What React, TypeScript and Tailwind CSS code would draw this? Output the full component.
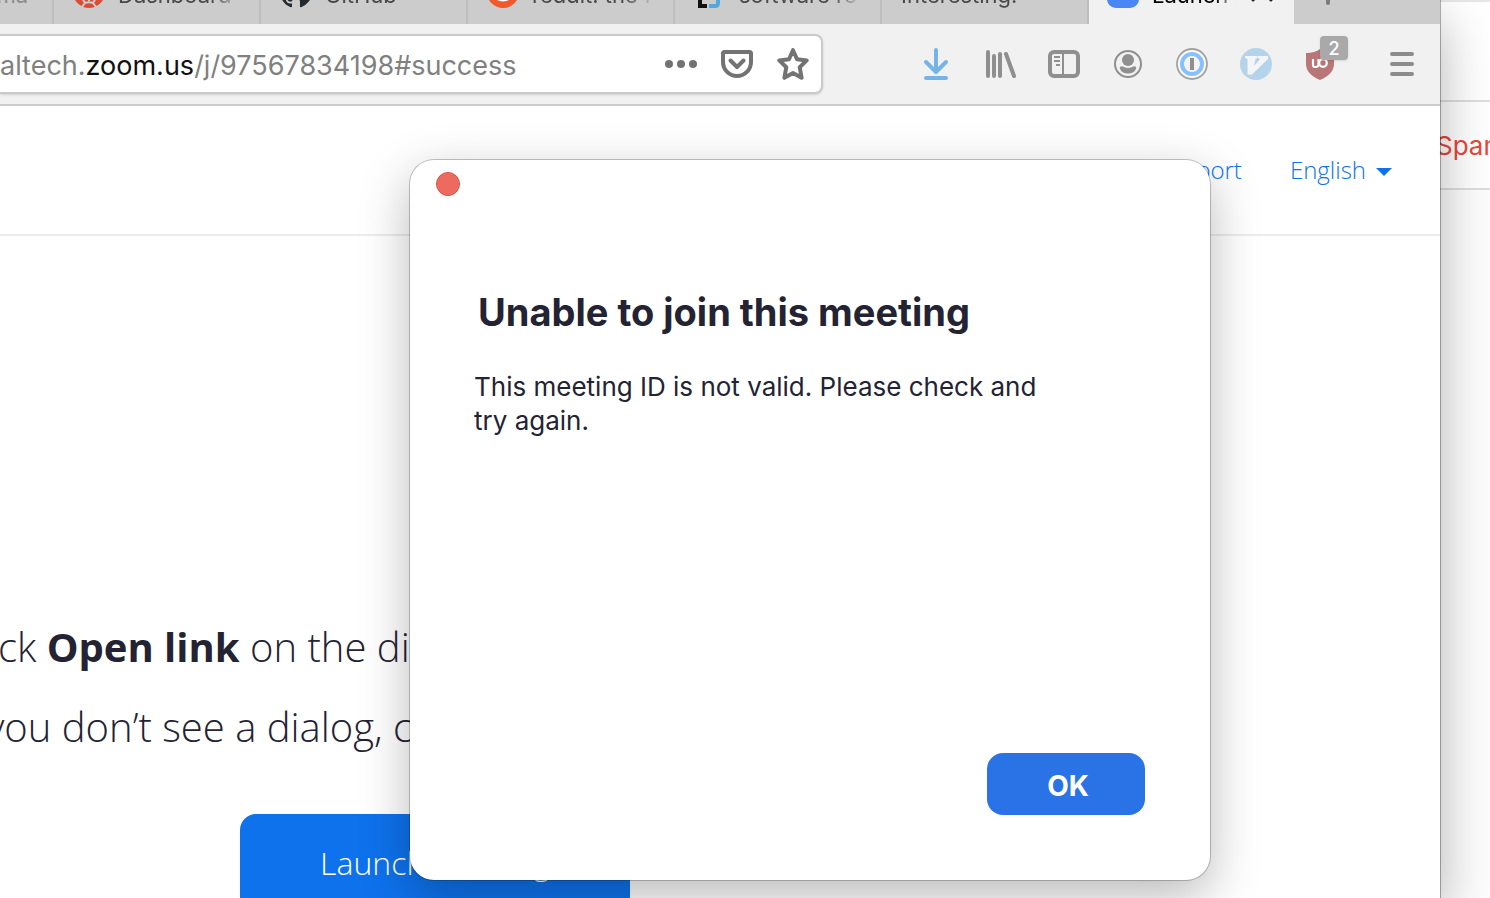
import React from 'react';

type TabProps = {
  label: string;
  icon?: React.ReactNode;
  active?: boolean;
};

function Tab({ label, icon, active }: TabProps) {
  return (
    <button
      className={
        active
          ? 'flex h-16 w-[205px] shrink-0 items-center gap-[13px] bg-[#f1f1f1] pr-5 pl-[18px] text-black'
          : 'flex h-16 w-[207px] shrink-0 items-center gap-[13px] border-r-2 border-[#bebebe] pr-[18px] pl-[19px] text-[#484848]'
      }
    >
      {icon}
      <span className="min-w-0 flex-1 overflow-hidden mask-r-from-75% pt-1.5 text-left text-[22px] leading-8 whitespace-nowrap">
        {label}
      </span>
      {active && (
        <svg className="size-6 shrink-0" viewBox="0 0 24 24" fill="none" stroke="#222" strokeWidth="3" strokeLinecap="round">
          <path d="M3 2 21 20M21 2 3 20" />
        </svg>
      )}
    </button>
  );
}

const icon = 'size-8 shrink-0';

function DashboardIcon() {
  return (
    <svg className={icon} viewBox="0 0 32 32">
      <circle cx="16" cy="16" r="16" fill="#dc4c35" />
      <path d="M8 32l4-5-3-5M24 32l-4-5 3-5M12 27q4-1.500 8 0" stroke="#ccc" strokeWidth="2" fill="none" />
      <path d="M16 21v4" stroke="#ccc" strokeWidth="2" />
    </svg>
  );
}

function GithubIcon() {
  return (
    <svg className={icon} viewBox="0 0 16 16" fill="#24292e">
      <path d="M8 0C3.58 0 0 3.58 0 8c0 3.54 2.29 6.53 5.47 7.59.4.07.55-.17.55-.38 0-.19-.01-.82-.01-1.49-2.01.37-2.53-.49-2.69-.94-.09-.23-.48-.94-.82-1.13-.28-.15-.68-.52-.01-.53.63-.01 1.08.58 1.23.82.72 1.21 1.87.87 2.33.66.07-.52.28-.87.51-1.07-1.78-.2-3.64-.89-3.64-3.95 0-.87.31-1.59.82-2.15-.08-.2-.36-1.02.08-2.12 0 0 .67-.21 2.2.82A7.6 7.6 0 0 1 8 3.87c.68 0 1.36.09 2 .27 1.53-1.04 2.2-.82 2.2-.82.44 1.1.16 1.92.08 2.12.51.56.82 1.27.82 2.15 0 3.07-1.87 3.75-3.65 3.95.29.25.54.73.54 1.48 0 1.07-.01 1.93-.01 2.2 0 .21.15.46.55.38A8.01 8.01 0 0 0 16 8c0-4.42-3.58-8-8-8Z" />
    </svg>
  );
}

function RedditIcon() {
  return (
    <svg className={icon} viewBox="0 0 32 32">
      <circle cx="16" cy="16" r="16" fill="#f1582b" />
      <ellipse cx="16" cy="18" rx="10" ry="7.5" fill="#fff" />
    </svg>
  );
}

function BracketIcon() {
  return (
    <svg className={icon} viewBox="0 0 32 32" fill="none" strokeWidth="4">
      <path d="M13 2H6v28h7" stroke="#111" />
      <path d="M15 2h6q3 0 3 3v22q0 3-3 3h-6" stroke="#4fa9dd" />
    </svg>
  );
}

function ZoomIcon() {
  return (
    <svg className={icon} viewBox="0 0 32 32">
      <rect width="32" height="32" rx="9" fill="#4a87f5" />
      <rect x="7" y="10" width="12" height="10" rx="2" fill="#fff" />
    </svg>
  );
}

function TabStrip() {
  return (
    <div className="flex h-6 shrink-0 items-end overflow-hidden bg-[#cccccc]">
      <div className="flex h-16 w-[54px] shrink-0 items-center justify-end border-r-2 border-[#bebebe] pt-1.5 pr-6 text-[22px] text-[#8c8c8c]">
        ma
      </div>
      <Tab label="Dashboard" icon={<DashboardIcon />} />
      <Tab label="GitHub" icon={<GithubIcon />} />
      <Tab label="reddit: the f" icon={<RedditIcon />} />
      <Tab label="software re" icon={<BracketIcon />} />
      <Tab label="Interesting!" />
      <Tab label="Launch M" icon={<ZoomIcon />} active />
      <button aria-label="New tab" className="flex h-16 items-center px-[18px]">
        <svg className={icon} viewBox="0 0 32 32" stroke="#7c7c7c" strokeWidth="4" strokeLinecap="round">
          <path d="M16 6v21M6 16h20" />
        </svg>
      </button>
    </div>
  );
}

function AddressBar() {
  return (
    <div className="flex h-[60px] flex-1 items-center gap-6 overflow-hidden rounded-r-lg border-2 border-l-0 border-[#cacaca] bg-white pr-3 shadow-sm">
      <div
        role="textbox"
        aria-label="Address"
        contentEditable
        suppressContentEditableWarning
        className="flex-1 overflow-hidden pt-1 text-[27px] leading-9 whitespace-nowrap text-[#808080] outline-none"
      >
        altech.<span className="text-[#111]">zoom.us</span>/j/97567834198#success
      </div>
      <button aria-label="Page actions">
        <svg className={icon} viewBox="0 0 32 32" fill="#737373">
          <circle cx="4" cy="16" r="4" />
          <circle cx="16" cy="16" r="4" />
          <circle cx="28" cy="16" r="4" />
        </svg>
      </button>
      <button aria-label="Save to Pocket">
        <svg className={icon} viewBox="0 0 32 32" fill="none" stroke="#737373" strokeWidth="4" strokeLinecap="round" strokeLinejoin="round">
          <path d="M3.5 4h25q1.500 0 1.500 1.500V14a14 14 0 0 1-28 0V5.500Q2 4 3.500 4Z" />
          <path d="m9.500 12.500 6.500 6.500 6.500-6.500" />
        </svg>
      </button>
      <button aria-label="Bookmark">
        <svg className={icon} viewBox="0 0 32 32" fill="none" stroke="#737373" strokeWidth="4" strokeLinejoin="round">
          <path d="m16 2.200 4 9 9.700 1.200-7 6.800 1.900 10.600L16 25 7.400 29.800l1.900-10.600-7-6.800L12 11.200Z" />
        </svg>
      </button>
    </div>
  );
}

function Toolbar() {
  return (
    <div className="flex h-[82px] shrink-0 items-center border-b-2 border-[#cbcbcb] bg-[#f1f1f1]">
      <AddressBar />
      <div className="ml-[97px] flex items-center gap-8">
        <button aria-label="Downloads">
          <svg className={icon} viewBox="0 0 32 32" fill="none" stroke="#76b3e6" strokeWidth="4" strokeLinecap="round" strokeLinejoin="round">
            <path d="M16 2v21M6 14l10 10 10-10M6 30h20" />
          </svg>
        </button>
        <button aria-label="Library">
          <svg className={icon} viewBox="0 0 32 32" stroke="#8f8f8f" strokeWidth="4" strokeLinecap="round">
            <path d="M4 4v24M10 8v20M16 6v22M22 6l8 22" />
          </svg>
        </button>
        <button aria-label="Sidebars">
          <svg className={icon} viewBox="0 0 32 32" fill="none" stroke="#8f8f8f">
            <rect x="2" y="4" width="28" height="24" rx="4" strokeWidth="4" />
            <path d="M15 4v24M6 9h6M6 13h6M8 17h4" strokeWidth="2" />
          </svg>
        </button>
        <button aria-label="Account">
          <svg className={icon} viewBox="0 0 32 32" fill="#8f8f8f">
            <circle cx="16" cy="16" r="13" fill="none" stroke="#8f8f8f" strokeWidth="2" />
            <circle cx="16" cy="12" r="6" />
            <path d="M10 18.200q6 3.600 12 0 2.500 0 2.200 2Q22.500 25.500 16 25.500t-8.200-5.300q-.3-2 2.200-2Z" />
          </svg>
        </button>
        <button aria-label="Password manager">
          <svg className={icon} viewBox="0 0 32 32">
            <circle cx="16" cy="16" r="15" fill="#fafafa" stroke="#a2a2a2" strokeWidth="1.800" />
            <circle cx="16" cy="16" r="10" fill="#f4f4f4" stroke="#87c0ff" strokeWidth="4" />
            <path d="M16 10v12" stroke="#8f8f8f" strokeWidth="4" />
          </svg>
        </button>
        <button aria-label="Vimium">
          <svg className={icon} viewBox="0 0 32 32">
            <circle cx="16" cy="16" r="16" fill="#b5d3ea" />
            <path d="M5 8h12.500v2l-2 1-1.500 7 6-7-2-1V8h10v3L12 26.500H7.500V11L5 10Z" fill="#f3f5f7" />
          </svg>
        </button>
        <button aria-label="uBlock, 2 blocked" className="relative">
          <svg className={icon} viewBox="0 0 32 32">
            <path d="M16 1q5 4 14 4v11q0 10-14 16Q2 26 2 16V5q9 0 14-4Z" fill="#b97676" />
            <path d="M9 11v6q0 2 2.500 2t3-2v-6" fill="none" stroke="#fff" strokeWidth="2.200" />
            <circle cx="19" cy="15" r="3.800" fill="none" stroke="#fff" strokeWidth="2.200" />
          </svg>
          <span className="absolute -top-3 left-4 flex h-6 w-7 items-center justify-center rounded-sm bg-[#a9a9a9] pt-0.5 text-lg leading-6 font-medium text-white shadow-sm">
            2
          </span>
        </button>
      </div>
      <button aria-label="Menu" className="mr-[22px] ml-[50px]">
        <svg className={icon} viewBox="0 0 32 32" stroke="#8c8c8c" strokeWidth="4" strokeLinecap="round">
          <path d="M6 6h20M6 16h20M6 26h20" />
        </svg>
      </button>
    </div>
  );
}

function Page() {
  return (
    <div className="flex flex-1 shrink-0 flex-col bg-white font-['Open_Sans',sans-serif]">
      <header className="flex h-[130px] items-center justify-end gap-12 border-b-2 border-[#ececec] pr-12 text-2xl font-light text-[#0e72ed]">
        <a href="#support">Support</a>
        <button className="flex items-center gap-2.5">
          English
          <svg className="mt-1 h-2 w-4" viewBox="0 0 16 8" fill="#0e72ed">
            <path d="M0 0h16L8 8Z" />
          </svg>
        </button>
      </header>
      <main className="flex w-[870px] flex-col items-center pt-[371px] text-[40px] leading-[80px] font-light whitespace-nowrap text-[#232333]">
        <p>
          Click <b className="font-bold">Open link</b> on the dialog shown by your browser
        </p>
        <p>
          If you don’t see a dialog, click <b className="font-bold">Launch Meeting</b> below
        </p>
        <button className="mt-[47px] flex h-[98px] w-[390px] shrink-0 items-center justify-center rounded-2xl bg-[#0e72ed] text-[32px] text-white">
          Launch Meeting
        </button>
      </main>
    </div>
  );
}

function MeetingDialog() {
  return (
    <section
      role="dialog"
      aria-labelledby="dialog-title"
      className="absolute top-[160px] left-[410px] z-20 flex h-[720px] w-[800px] flex-col rounded-3xl bg-white pr-[65px] pb-[65px] pl-16 text-[#232333] shadow-[0_0_0_1px_rgba(0,0,0,0.22),0_16px_50px_rgba(0,0,0,0.28)]"
    >
      <button aria-label="Close" className="mt-3 -ml-[38px] size-6 rounded-full border border-[#dd5549] bg-[#ed6a5e]" />
      <h1 id="dialog-title" className="mt-[92px] pl-1 text-[38px] leading-[48px] font-bold">
        Unable to join this meeting
      </h1>
      <p className="mt-[34px] max-w-[600px] text-[26px] leading-[34px]">
        This meeting ID is not valid. Please check and try again.
      </p>
      <button className="mt-auto h-[62px] w-[158px] self-end rounded-2xl bg-[#2a73e6] pt-1 pl-1 text-[28px] font-bold text-white">
        OK
      </button>
    </section>
  );
}

export default function App() {
  return (
    <div className="relative flex h-screen overflow-hidden bg-white font-[Inter,sans-serif]">
      <div className="relative z-10 flex min-w-0 flex-1 flex-col overflow-hidden shadow-[0_0_0_1px_rgba(0,0,0,0.3),0_20px_50px_rgba(0,0,0,0.3)]">
        <TabStrip />
        <Toolbar />
        <Page />
      </div>
      <aside className="-ml-1 w-[54px] overflow-hidden border-t-2 border-[#e6e6e6] bg-[#fdfdfd]">
        <div className="h-[100px] border-b-2 border-[#dedede] bg-white" />
        <div className="flex h-[88px] items-center border-b-2 border-[#dedede] bg-white">
          <a href="#spam" className="text-[26px] text-[#e8463a]">
            Spam
          </a>
        </div>
      </aside>
      <MeetingDialog />
    </div>
  );
}
